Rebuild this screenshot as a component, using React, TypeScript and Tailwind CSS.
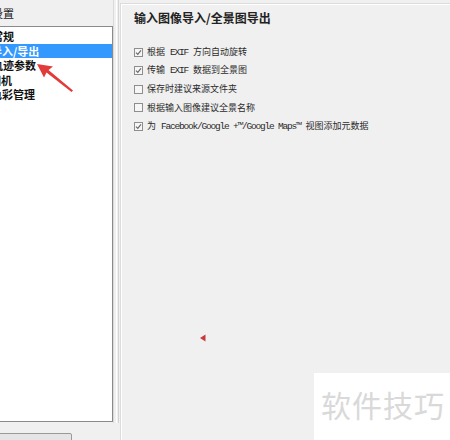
const cjk = "font-['Noto_Sans_CJK_SC',sans-serif]";

const treeItems = [
  { label: '常规', ml: '-ml-[8px]', selected: false },
  { label: '导入/导出', ml: '-ml-[9px]', selected: true },
  { label: '轨迹参数', ml: '-ml-[8px]', selected: false },
  { label: '相机', ml: '-ml-[10px]', selected: false },
  { label: '色彩管理', ml: '-ml-[9px]', selected: false },
];

function Mono({ children }: { children: React.ReactNode }) {
  return (
    <span className="font-['Liberation_Mono',monospace] text-[9.5px] tracking-[-1.2px] mx-[5px]">{children}</span>
  );
}

function Check({ checked }: { checked: boolean }) {
  return (
    <span className="w-[9px] h-[9px] border border-[#8e8e8e] bg-[#f6f6f6] flex items-center justify-center shrink-0">
      {checked && (
        <svg width="7" height="7" viewBox="0 0 7 7">
          <path d="M1 3.6 L2.8 5.4 L6 1.4" fill="none" stroke="#6a6a6a" strokeWidth="1.2" />
        </svg>
      )}
    </span>
  );
}

const options = [
  { checked: true, text: <>根据<Mono>EXIF</Mono>方向自动旋转</> },
  { checked: true, text: <>传输<Mono>EXIF</Mono>数据到全景图</> },
  { checked: false, text: <>保存时建议来源文件夹</> },
  { checked: false, text: <>根据输入图像建议全景名称</> },
  { checked: true, text: <>为<Mono>Facebook/Google +™/Google Maps™</Mono>视图添加元数据</> },
];

export default function App() {
  return (
    <div className={`relative w-[450px] h-[440px] overflow-hidden bg-[#f0f0f0] flex ${cjk}`}>
      {/* left: tree */}
      <div className="w-[113px] shrink-0 flex flex-col">
        <div className="h-[26px] shrink-0 pt-[5px] text-[11px] leading-[16px] text-[#1a1a1a]">
          <span className="-ml-[8px] block">设置</span>
        </div>
        <div className="h-[396px] shrink-0 -ml-[1px] bg-white border border-[#8a8a8a] pt-[2px] overflow-hidden">
          {treeItems.map((it) => (
            <div
              key={it.label}
              className={`h-[14.5px] flex items-center text-[11px] font-bold whitespace-nowrap ${it.selected ? 'bg-[#3399ff] text-white' : 'text-[#111]'}`}
            >
              <span className={`${it.ml} leading-[14px]`}>{it.label}</span>
            </div>
          ))}
        </div>
        <div className="shrink-0 mt-[11px] -ml-[2px] w-[74px] h-[22px] border border-[#9a9a9a] rounded-[2px] bg-[#e5e5e5] text-[11px] text-center pt-[4px] leading-[14px]">
          导入设置
        </div>
      </div>

      {/* splitter */}
      <div className="w-[7px] h-[423px] shrink-0 flex">
        <div className="w-[1px] bg-[#dadada]" />
        <div className="w-[2px]" />
        <div className="w-[1px] bg-white" />
        <div className="w-[1px]" />
        <div className="w-[1px] bg-[#d4d4d4]" />
      </div>

      {/* right: options group */}
      <div className="pt-[3px]">
        <div className="w-[340px] h-[460px] border-t border-l border-[#dcdcdc] shadow-[inset_1px_1px_0_#ffffff] pl-[13px] pt-[6px]">
          <div className="text-[12px] font-bold leading-[16px] text-[#222] whitespace-nowrap">输入图像导入/全景图导出</div>
          <div className="mt-[17px] flex flex-col">
            {options.map((o, i) => (
              <div key={i} className="h-[18.5px] flex items-center text-[9px] text-[#2a2a2a] whitespace-nowrap">
                <Check checked={o.checked} />
                <span className="ml-[4px] leading-[12px]">{o.text}</span>
              </div>
            ))}
          </div>
        </div>
      </div>

      {/* red annotation arrow */}
      <svg className="absolute left-0 top-0 pointer-events-none" width="450" height="440">
        <path
          d="M37 64 L53 66.5 L48.5 70 L73 90.5 L71.5 92 L46.5 72.5 L44 77.5 Z"
          fill="#e23b3b"
        />
        <path d="M200 338 L205.5 334.5 L205.5 341.5 Z" fill="#c9393b" />
      </svg>

      {/* watermark */}
      <div className="absolute left-[314px] top-[373px] w-[136px] h-[67px] bg-white">
        <div className="pl-[7px] pt-[12px] text-[30px] leading-[38px] text-[#d9d9d9] whitespace-nowrap tracking-[1px]">
          软件技巧
        </div>
      </div>
    </div>
  );
}
